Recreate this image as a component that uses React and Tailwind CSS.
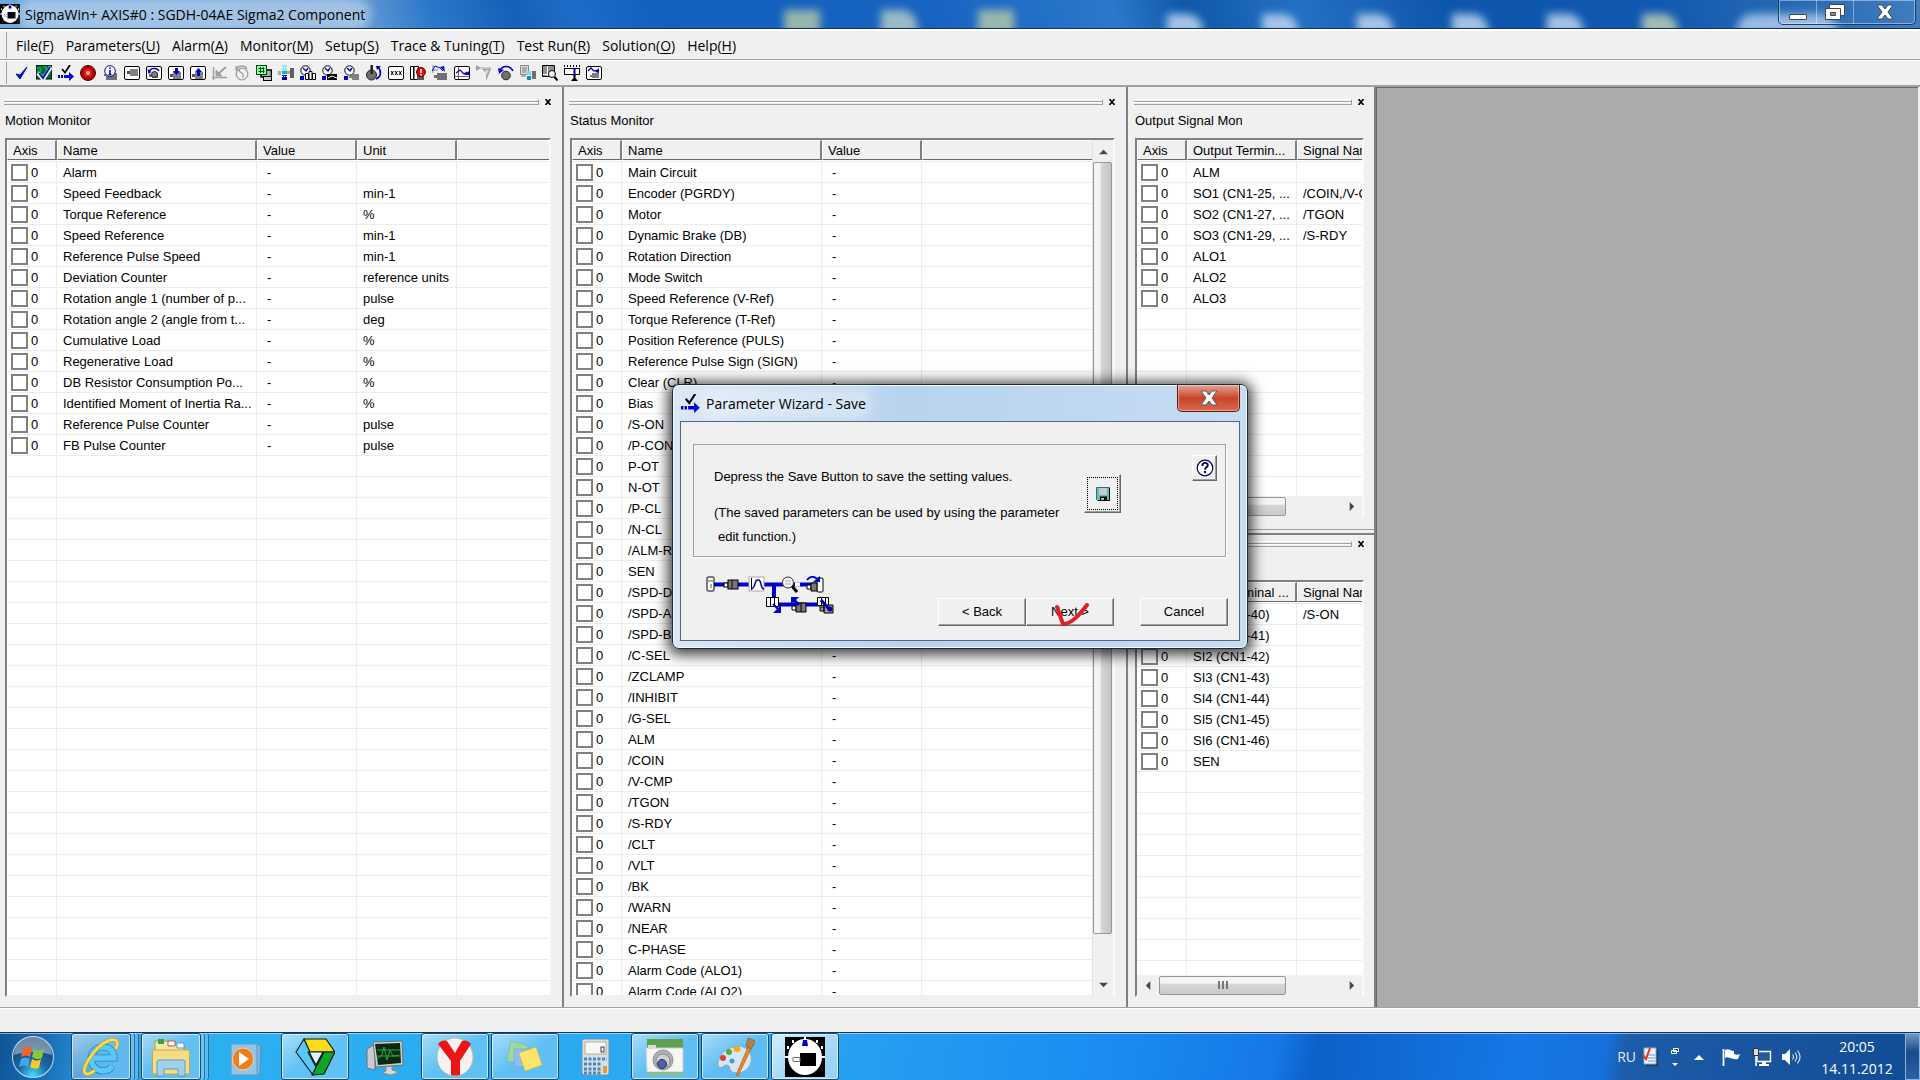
import clsx from "clsx";

const menus = [
  ["File", "F"],
  ["Parameters", "U"],
  ["Alarm", "A"],
  ["Monitor", "M"],
  ["Setup", "S"],
  ["Trace & Tuning", "T"],
  ["Test Run", "R"],
  ["Solution", "O"],
  ["Help", "H"],
];

const motionRows = [
  ["Alarm", "-", ""],
  ["Speed Feedback", "-", "min-1"],
  ["Torque Reference", "-", "%"],
  ["Speed Reference", "-", "min-1"],
  ["Reference Pulse Speed", "-", "min-1"],
  ["Deviation Counter", "-", "reference units"],
  ["Rotation angle 1 (number of p...", "-", "pulse"],
  ["Rotation angle 2 (angle from t...", "-", "deg"],
  ["Cumulative Load", "-", "%"],
  ["Regenerative Load", "-", "%"],
  ["DB Resistor Consumption Po...", "-", "%"],
  ["Identified Moment of Inertia Ra...", "-", "%"],
  ["Reference Pulse Counter", "-", "pulse"],
  ["FB Pulse Counter", "-", "pulse"],
];

const statusRows = [
  "Main Circuit", "Encoder (PGRDY)", "Motor", "Dynamic Brake (DB)", "Rotation Direction",
  "Mode Switch", "Speed Reference (V-Ref)", "Torque Reference (T-Ref)", "Position Reference (PULS)",
  "Reference Pulse Sign (SIGN)", "Clear (CLR)", "Bias", "/S-ON", "/P-CON", "P-OT", "N-OT", "/P-CL",
  "/N-CL", "/ALM-RST", "SEN", "/SPD-D", "/SPD-A", "/SPD-B", "/C-SEL", "/ZCLAMP", "/INHIBIT",
  "/G-SEL", "ALM", "/COIN", "/V-CMP", "/TGON", "/S-RDY", "/CLT", "/VLT", "/BK", "/WARN", "/NEAR",
  "C-PHASE", "Alarm Code (ALO1)", "Alarm Code (ALO2)",
].map((name) => [name, "-"]);

const outputRows = [
  ["ALM", ""],
  ["SO1 (CN1-25, ...", "/COIN,/V-CMP"],
  ["SO2 (CN1-27, ...", "/TGON"],
  ["SO3 (CN1-29, ...", "/S-RDY"],
  ["ALO1", ""],
  ["ALO2", ""],
  ["ALO3", ""],
];

const inputRows = [
  ["SI0 (CN1-40)", "/S-ON"],
  ["SI1 (CN1-41)", ""],
  ["SI2 (CN1-42)", ""],
  ["SI3 (CN1-43)", ""],
  ["SI4 (CN1-44)", ""],
  ["SI5 (CN1-45)", ""],
  ["SI6 (CN1-46)", ""],
  ["SEN", ""],
];

/* ---------- toolbar icons, 16x16 pixel style ---------- */

const Box = () => <rect x=".5" y="1.5" width="15" height="13" rx="1.5" fill="#fff" stroke="#000" />;
const Motor = ({ x = 3, y = 5 }) => (
  <g>
    <rect x={x} y={y + 1} width="3" height="3" fill="#555" />
    <rect x={x + 3} y={y - 1} width="8" height="7" fill="#808080" />
  </g>
);
const Gauge = () => (
  <g>
    <rect x="0" y="11" width="4" height="4" fill="#0000c8" />
    <circle cx="5.5" cy="5.5" r="4.7" fill="#fff" stroke="#000" />
    <path d="M3 3l3 3 2-3" fill="none" stroke="#0000c8" strokeWidth="1.4" />
  </g>
);

const toolIcons = {
  "Check": <path d="M2 9l4 5 7-12-7 8z" fill="#0010c0" stroke="#0010c0" />,
  "Edit parameters": (
    <g>
      <rect width="16" height="14" fill="#063" stroke="#000" />
      <path d="M1 3h4v3H2v4h3M7 2h3v3h3V1" fill="none" stroke="#2c4" />
      <path d="M2 8l5 6 8-12" fill="none" stroke="#fff" strokeWidth="4" />
      <path d="M3 8l4 5 7-11" fill="none" stroke="#0010c0" strokeWidth="2" />
    </g>
  ),
  "Parameter wizard": <WizardMark />,
  "Alarm": (
    <g>
      <circle cx="8" cy="8" r="7.5" fill="#b00000" stroke="#500" />
      <circle cx="8" cy="8" r="4" fill="#e02020" />
      <circle cx="8" cy="8" r="2" fill="#ff9a8a" />
    </g>
  ),
  "Product information": (
    <g>
      <path d="M2 9h2v2H2zM4 8h11v7H4z" fill="#707070" />
      <circle cx="8" cy="6" r="5.3" fill="#fff" stroke="#0010a0" />
      <path d="M8 2.5v1.6M8 5v4.6M6.5 9.5h3" stroke="#0010c0" strokeWidth="1.6" />
    </g>
  ),
  "Motor": <g><Box /><Motor /></g>,
  "Jog": (
    <g>
      <Box />
      <path d="M3 9h3v3H3zM6 8h6v5H6z" fill="#707070" />
      <circle cx="8.5" cy="9.5" r="3" fill="#808080" stroke="#222" />
      <path d="M3 7c1-4 8-5 10-1" fill="none" stroke="#0000c8" strokeWidth="1.5" />
      <path d="M1.500 4l1 5 3-2z" fill="#0000c8" />
    </g>
  ),
  "Write": <g><Box /><Motor y={8} x={2} /><path d="M7 3h3v3h2l-3.500 4L5 6h2z" fill="#0000c8" /></g>,
  "Read": <g><Box /><Motor y={8} x={2} /><path d="M7 11h3V7h2L8.500 3 5 7h2z" fill="#0000c8" /></g>,
  "Origin": (
    <g fill="none" stroke="#a0a0a0">
      <path d="M1.500 2v13M0 12.500h15" strokeWidth="1.5" />
      <path d="M14 2L6 9" strokeWidth="2" />
      <path d="M4 5v6h6z" fill="#a0a0a0" />
    </g>
  ),
  "Rotation": (
    <g fill="none" stroke="#a0a0a0" strokeWidth="1.300">
      <circle cx="8" cy="9" r="5.800" />
      <path d="M2 4c3-4 9-4 11 0M5 6l4 3v4M2 1v4h4" />
    </g>
  ),
  "System monitor": (
    <g>
      <path d="M10 5h5.500v7H5V9.500" fill="#aaa" stroke="#000" strokeWidth="1.400" />
      <rect x="7.500" y="11.500" width="8" height="4" fill="#ccc" stroke="#000" />
      <rect x=".5" y=".5" width="10" height="9" fill="#9f9" stroke="#042" />
      <path d="M2.500 3.500h6M2.500 6.500h6M4.500 2v6M7.500 2v6" stroke="#052" />
    </g>
  ),
  "Encoder": (
    <g>
      <path d="M0 6h3v4H0zM9 6h3v3H9z" fill="#aaa" />
      <path d="M12 3h4v10h-4z" fill="#606060" />
      <path d="M4 0h5v6H4z" fill="#8fe8f0" />
      <path d="M4 6h5v3H4z" fill="#18b0b8" />
      <path d="M4 10h5v5H4z" fill="#0000a0" />
      <path d="M4 2.500h5M4 11.500h5" stroke="#fff" strokeDasharray="1 1" />
    </g>
  ),
  "Trace bars": (
    <g>
      <Gauge />
      <path d="M5.500 8.500h3v6h-3zM9 6.500h3v8H9zM12.500 8.500h3v6h-3z" fill="#fff" stroke="#000" />
    </g>
  ),
  "Trace wave": <g><Gauge /><path d="M5 9h10v6H5z" /><path d="M6 13l4-2 5 2" fill="none" stroke="#fff" /></g>,
  "Trace motor": <g><Gauge /><path d="M5 10h3v3H5zM8 9h7v6H8z" fill="#808080" /></g>,
  "Rotate motor": (
    <g>
      <circle cx="5.500" cy="10" r="5" fill="#707070" stroke="#222" />
      <path d="M4.500 0h2.500v9H4.500z" fill="#222" />
      <path d="M10 14c5-2 6-8 2-12" fill="none" stroke="#0000c8" strokeWidth="1.600" />
      <path d="M10 1h5l-4 4z" fill="#0000c8" />
    </g>
  ),
  "Multi-turn": <g><Box /><path d="M3 6l2.500 4M5.500 6L3 10M7 6l2.500 4M9.500 6L7 10M11 6l2.500 4M13.500 6L11 10" stroke="#000" /></g>,
  "Alarm trace": (
    <g>
      <path d="M.5 1.500h3v13h-3zM4 1.500h4.500v13H4z" fill="#fff" stroke="#000" />
      <path d="M7 3h7v12H7z" fill="#555" />
      <circle cx="11" cy="7" r="4.500" fill="#d81010" stroke="#700" />
      <path d="M11 4v4M11 9v1.500" stroke="#fff" strokeWidth="1.500" />
    </g>
  ),
  "Program jog": (
    <g>
      <path d="M1 0v8M0 5h6" stroke="#888" />
      <path d="M0 6l3-5 5 2 3 3" fill="none" stroke="#0000c8" />
      <path d="M8 2l5 5-1-6z" fill="#0000c8" />
      <path d="M2 10h3v3H2zM5 8h10v7H5z" fill="#707070" />
    </g>
  ),
  "Trace": (
    <g>
      <Box />
      <path d="M4.500 2v12M1 11.500h14" stroke="#666" />
      <path d="M2 8l4-3 4 4 3-2" fill="none" stroke="#0000c8" strokeWidth="1.300" />
      <path d="M10 10h5V6z" fill="#0000c8" />
    </g>
  ),
  "Filter": (
    <g fill="#a0a0a0">
      <path d="M0 0l5 3-5 3zM0 2.500h15v1H0z" />
      <path d="M6 4h9l-5 12V8z" />
      <path d="M9 5h4L10 11z" fill="#d8d8d8" />
    </g>
  ),
  "Oscillation": (
    <g>
      <circle cx="8" cy="10.500" r="4.300" fill="#707070" stroke="#222" />
      <path d="M2 6c2-6 10-6 13 0" fill="none" stroke="#0000c8" strokeWidth="1.600" />
      <path d="M0 3l1 6 5-4z" fill="#0000c8" />
    </g>
  ),
  "Report": (
    <g>
      <path d="M.5.5h8v9h-8z" fill="#ddd" stroke="#888" />
      <path d="M2 3h5M2 5h5M2 7h4M1 11h5" stroke="#777" />
      <path d="M7 6h4v4H7z" fill="#6fe0e8" />
      <path d="M7 11h4v4H7z" fill="#1090a8" />
      <path d="M12 6h4v8h-4z" fill="#707070" />
    </g>
  ),
  "Search": (
    <g>
      <path d="M.5.500h12v11H.5z" fill="#909090" stroke="#000" />
      <path d="M5.500 1v10M1 9.500h11" stroke="#fff" />
      <circle cx="10" cy="9" r="3.500" fill="#fff" stroke="#000" />
      <path d="M12.500 12l3 3.500" stroke="#000" strokeWidth="2" />
    </g>
  ),
  "Machine": (
    <g>
      <path d="M0 1h16" stroke="#000" strokeWidth="2" strokeDasharray="1 2" />
      <path d="M.5 3.500h15v6H.5z" fill="#fff" stroke="#000" />
      <path d="M10.500 3v8" stroke="#0000a0" strokeWidth="2" />
      <path d="M9.500 10h2v3l2.500 3H7l2.500-3z" />
    </g>
  ),
  "Mechanical analysis": (
    <g>
      <Box />
      <path d="M2 6l3-3 3 3 3-1" fill="none" stroke="#0000c8" strokeWidth="1.300" />
      <path d="M9 7l4-4v5z" fill="#0000c8" />
      <path d="M4 10h2v2H4zM6 8h7v5H6z" fill="#808080" />
    </g>
  ),
};

function WizardMark() {
  return (
    <g>
      <path d="M4 4l3 3.500L12 0" fill="none" stroke="#000" strokeWidth="1.800" />
      <path d="M0 10h2v3H0zM3 10h2v3H3zM6 10h5V7l5 4.500-5 4.500v-3H6z" fill="#0000d8" />
    </g>
  );
}

function SigmaLogo({ className }) {
  return (
    <svg viewBox="0 0 40 40" className={className} preserveAspectRatio="none" aria-hidden="true">
      <rect width="40" height="40" />
      <ellipse cx="20" cy="20" rx="17" ry="18" fill="#fff" />
      <path d="M0 20h4M36 20h4" stroke="#fff" strokeWidth="2" />
      <path d="M20 0v3M8 3v3M32 3v3M3 9v3M37 9v3" stroke="#fff" strokeWidth="2" />
      <path d="M18 3h4l1 6h-6z" fill="#00c" />
      <rect x="15" y="16" width="16" height="13" />
      <path d="M8 20.500h7v4H8z" fill="#fff" stroke="#777" />
    </svg>
  );
}

/* ---------- docked panels ---------- */

function Gripper({ label }) {
  return (
    <div className="flex h-[7px] items-center gap-1">
      <div className="h-[6px] flex-1 border-y border-r border-t-white border-r-[#a0a0a0] border-b-[#a0a0a0] bg-[#f0f0f0]">
        <div className="mt-px h-px bg-[#a0a0a0]" />
        <div className="h-px bg-white" />
      </div>
      <button aria-label={`Close ${label}`} className="flex w-[8px] justify-end">
        <svg viewBox="0 0 6 6" className="size-[6px]" aria-hidden="true">
          <path d="M.5 0L5.500 6M5.500 0L.5 6" stroke="#000" strokeWidth="1.600" />
        </svg>
      </button>
    </div>
  );
}

function SignalTable({ label, columns, rows }) {
  const filler = Array.from({ length: Math.max(0, 64 - rows.length) });
  return (
    <table aria-label={label} className="w-full table-fixed border-separate border-spacing-0">
      <colgroup>
        {columns.map((c, i) => (
          <col key={i} className={c.width} />
        ))}
      </colgroup>
      <thead>
        <tr>
          {columns.map((c, i) => (
            <th key={i} className="h-[22px] overflow-hidden border-b border-[#ececec] p-0 pb-px text-left font-normal">
              <div
                className={clsx(
                  "h-[20px] overflow-hidden whitespace-nowrap border-b border-t border-l border-b-[#696969] border-t-white border-l-white bg-[#f0f0f0] pl-[5px] leading-[19px]",
                  i < columns.length - 1 && "border-r-2 border-r-[#808080]"
                )}
              >
                {c.title}
              </div>
            </th>
          ))}
        </tr>
      </thead>
      <tbody>
        {rows.map((row, r) => (
          <tr key={r}>
            <td className="h-[21px] border-r border-b border-[#ececec] p-0 pt-px">
              <label className="flex items-center gap-[3px] pl-1 leading-[19px]">
                <input
                  type="checkbox"
                  className="size-[17px] appearance-none border-2 border-[#808080] bg-white"
                />
                0
              </label>
            </td>
            {columns.slice(1).map((c, i) => (
              <td
                key={i}
                className={clsx(
                  "overflow-hidden whitespace-nowrap border-b border-[#ececec] p-0 pt-px leading-[19px]",
                  i < columns.length - 2 && "border-r",
                  c.title === "Value" ? "pl-[10px]" : "pl-[6px]"
                )}
              >
                {row[i]}
              </td>
            ))}
          </tr>
        ))}
        {filler.map((_, r) => (
          <tr key={`f${r}`}>
            {columns.map((c, i) => (
              <td
                key={i}
                className={clsx(
                  "h-[21px] border-b border-[#ececec] p-0",
                  i < columns.length - 1 && "border-r"
                )}
              />
            ))}
          </tr>
        ))}
      </tbody>
    </table>
  );
}

function Arrow({ d }) {
  return (
    <svg viewBox="0 0 10 10" className="size-[9px]" aria-hidden="true">
      <path d={d} fill="#484848" />
    </svg>
  );
}

function VScroll() {
  return (
    <div className="flex w-[21px] shrink-0 flex-col items-center border-l border-[#e4e4e4] bg-[#f0f0f0]">
      <button aria-label="Scroll up" className="flex h-[22px] items-center"><Arrow d="M0 8l5-5 5 5z" /></button>
      <div className="flex w-full flex-1 flex-col">
        <div className="w-[19px] flex-[773] rounded-[2px] border border-[#979797] bg-linear-to-r from-[#f4f4f4] from-35% via-[#d4d5d8] via-45% to-[#c2c4c9]" />
        <div className="flex-[40]" />
      </div>
      <button aria-label="Scroll down" className="flex h-[21px] items-center"><Arrow d="M0 3l5 5 5-5z" /></button>
    </div>
  );
}

function HScroll() {
  return (
    <div className="flex h-[20px] shrink-0 items-center bg-[#f0f0f0]">
      <button aria-label="Scroll left" className="flex w-[22px] justify-center"><Arrow d="M7 0L2 5l5 5z" /></button>
      <div className="flex h-[19px] w-[127px] items-center justify-center gap-[2px] rounded-[2px] border border-[#979797] bg-linear-to-b from-[#f4f4f4] from-35% via-[#d4d5d8] via-45% to-[#c8cacf]">
        <i className="h-2 w-[2px] bg-[#777]" />
        <i className="h-2 w-[2px] bg-[#777]" />
        <i className="h-2 w-[2px] bg-[#777]" />
      </div>
      <div className="flex-1" />
      <button aria-label="Scroll right" className="flex w-[22px] justify-center"><Arrow d="M3 0l5 5-5 5z" /></button>
    </div>
  );
}

function Panel({ title, clipTitle, columns, rows, vscroll, hscroll, className }) {
  return (
    <section className={clsx("flex min-h-0 flex-col pt-[11px] pl-1 text-[13px]", className)}>
      <Gripper label={title} />
      <h2 className={clsx("h-[33px] overflow-hidden whitespace-nowrap pl-px leading-[31px]", clipTitle && "w-[108px]")}>
        {title}
      </h2>
      <div className="ml-px flex min-h-0 flex-1 border-2 border-t-[#808080] border-r-[#fafafa] border-b-[#f0f0f0] border-l-[#808080] bg-white">
        <div className="flex min-w-0 flex-1 flex-col">
          <div className="min-h-0 flex-1 overflow-hidden">
            <SignalTable label={title} columns={columns} rows={rows} />
          </div>
          {hscroll && <HScroll />}
        </div>
        {vscroll && <VScroll />}
      </div>
    </section>
  );
}

/* ---------- wizard dialog ---------- */

const raised =
  "border border-t-white border-l-white border-r-[#696969] border-b-[#696969] bg-[#f0f0f0] shadow-[inset_-1px_-1px_0_#a0a0a0]";

function FlowDiagram() {
  return (
    <svg viewBox="0 0 128 38" className="h-[38px] w-[128px]" role="img" aria-label="Wizard steps">
      <path d="M8 8.500h104M68 8v20M60 28.500h55" stroke="#0000c8" strokeWidth="4" fill="none" />
      <rect x="1" y="1" width="7" height="14" rx="1" fill="#fff" stroke="#000" />
      <path d="M2 5h5M5 8v4" stroke="#555" />
      <rect x="18" y="7" width="4" height="4" fill="#fff" stroke="#000" />
      <rect x="22" y="4" width="10" height="9" fill="#777" stroke="#000" />
      <path d="M26 4v9" stroke="#000" />
      <rect x="43" y="1" width="15" height="14" fill="#fff" stroke="#aaa" />
      <path d="M45.500 2v12" stroke="#000" />
      <path d="M45 13c5 0 3-9 6.500-9h1C56 4 54 13 58 13" stroke="#0000a0" strokeWidth="1.500" fill="none" />
      <path d="M86 10l5 6" stroke="#000" strokeWidth="3" />
      <circle cx="82" cy="6.500" r="5.500" fill="#f4f4f4" stroke="#333" />
      <path d="M79 5h6M79 8h6" stroke="#aaa" />
      <path d="M89 8.500h5" stroke="#fff" strokeWidth="4" />
      <rect x="111" y="2" width="6" height="14" rx="1" fill="#fff" stroke="#000" />
      <path d="M101 9h4v4h-4z" fill="#fff" stroke="#000" />
      <path d="M105 7h6v8h-6z" fill="#777" stroke="#000" />
      <path d="M101 4c3-4 7-4 10-1" stroke="#0000c8" strokeWidth="2" fill="none" />
      <path d="M107 6h7V0z" fill="#0000c8" />
      <path d="M60.500 21.500h4v9h-4zM64.500 21.500h4v9h-4zM68.500 21.500h4v9h-4z" fill="#fff" stroke="#000" />
      <path d="M67 28l6 6" stroke="#0000c8" strokeWidth="2" />
      <path d="M75 29v8h-8z" fill="#0000c8" />
      <path d="M86 30h4v4h-4z" fill="#fff" stroke="#000" />
      <path d="M90 27h10v9H90z" fill="#777" stroke="#000" />
      <path d="M95 27v9" stroke="#000" />
      <path d="M93 29l-5-5" stroke="#0000c8" strokeWidth="3" />
      <path d="M85 29v-8h8z" fill="#0000c8" />
      <path d="M111.500 21.500h4v8h-4zM115.500 21.500h4v8h-4zM119.500 21.500h3v8h-3z" fill="#fff" stroke="#000" />
      <path d="M114 31h4v4h-4zM118 29h9v8h-9z" fill="#999" stroke="#000" />
      <path d="M115 24l9 10" stroke="#0000a8" strokeWidth="3" />
      <circle cx="124" cy="33" r="2.500" fill="#0000a8" />
    </svg>
  );
}

function WizardDialog() {
  return (
    <div
      role="dialog"
      aria-label="Parameter Wizard - Save"
      className="absolute top-[384px] left-[672px] flex h-[265px] w-[576px] flex-col rounded-[7px] border border-[#1e2a38] bg-linear-to-r from-[#dbe8f5] via-[#b9d3ef] via-40% to-[#c6dcf2] px-[7px] pb-[7px] shadow-[inset_0_0_0_1px_#f2f8ff,0_2px_14px_4px_rgba(0,0,0,0.75)]"
    >
      <div className="flex h-[36px] items-start justify-between">
        <div className="flex items-center gap-[6px] pt-[9px] pl-px">
          <svg viewBox="0 0 16 16" className="size-[19px]" aria-hidden="true"><WizardMark /></svg>
          <span className="rounded bg-white/30 font-['Open_Sans',sans-serif] text-[14px] leading-[19px] text-black shadow-[0_0_10px_6px_rgba(255,255,255,0.3)]">
            Parameter Wizard - Save
          </span>
        </div>
        <button
          aria-label="Close dialog"
          className="flex h-[27px] w-[63px] items-center justify-center rounded-b-[5px] border border-t-0 border-[#5a1a12] bg-linear-to-b from-[#e3a394] via-[#c9432a] via-50% to-[#d8694c] shadow-[inset_0_0_0_1px_rgba(255,255,255,0.4)]"
        >
          <svg viewBox="0 0 18 16" className="h-4 w-[18px]" aria-hidden="true">
            <path d="M1 1h5l3 4 3-4h5l-5 7 5 7h-5l-3-4-3 4H1l5-7z" fill="#fff" stroke="#555a66" />
          </svg>
        </button>
      </div>
      <div className="flex flex-1 flex-col border border-[#56677c] bg-[#f0f0f0] pt-[22px] pr-[13px] pl-[12px] text-[13px]">
        <div className="flex h-[113px] border border-[#a0a0a0] pt-[10px] pr-[8px] pl-[20px] shadow-[1px_1px_0_#fff]">
          <div className="flex-1 pt-[12px]">
            <p className="leading-[20px]">Depress the Save Button to save the setting values.</p>
            <p className="pt-[14px] leading-[24px] whitespace-nowrap">
              (The saved parameters can be used by using the parameter
              <br />
              <span className="pl-1">edit function.)</span>
            </p>
          </div>
          <button aria-label="Save" className={clsx("mt-[19px] mr-[71px] h-[39px] w-[37px] p-[2px]", raised)}>
            <span className="flex size-full items-center justify-center border border-dotted border-black">
              <svg viewBox="0 0 14 14" className="size-[14px]" aria-hidden="true">
                <path d="M.5.500h13v13h-12l-1-1z" fill="#5cc0bc" stroke="#3a6a6a" />
                <path d="M13.500 1v12.500H2" fill="none" stroke="#000" />
                <path d="M3 1h8v7H3z" fill="#c8c8c8" />
                <path d="M4 9.500h7V14H4z" />
                <path d="M5 11h3v2H5z" fill="#bbb" />
              </svg>
            </span>
          </button>
          <button aria-label="Help" className={clsx("flex h-[26px] w-[25px] items-center justify-center", raised)}>
            <svg viewBox="0 0 18 18" className="size-[18px]" aria-hidden="true">
              <circle cx="9" cy="9" r="7.800" fill="#fff" stroke="#000060" strokeWidth="1.200" />
              <path d="M6.300 7c0-4 5.500-4 5.500-.8C11.800 8.500 9 8 9 10.800" fill="none" stroke="#000060" strokeWidth="1.900" />
              <path d="M8 12h2v2H8z" fill="#000060" />
            </svg>
          </button>
        </div>
        <div className="flex pt-[19px]">
          <div className="flex-1 pl-[13px]"><FlowDiagram /></div>
          <div className="mt-[22px] -mr-[2px] flex h-[28px]">
            <button className={clsx("w-[88px]", raised)}>&lt; Back</button>
            <button className={clsx("relative mr-[26px] w-[88px]", raised)}>
              Next &gt;
              <svg viewBox="0 0 34 24" className="absolute top-[4px] left-[28px] h-6 w-[34px]" aria-hidden="true">
                <path d="M2 4c2 5 4 12 6 17 9 0 17-10 24-19" fill="none" stroke="#e0202a" strokeWidth="4" strokeLinecap="round" strokeLinejoin="round" />
              </svg>
            </button>
            <button className={clsx("w-[88px]", raised)}>Cancel</button>
          </div>
        </div>
      </div>
    </div>
  );
}

/* ---------- taskbar ---------- */

function StartOrb() {
  return (
    <svg viewBox="0 0 44 44" className="size-[44px]" aria-hidden="true">
      <defs>
        <radialGradient id="orb" cx=".5" cy=".95" r=".9">
          <stop offset="0" stopColor="#3fe0ff" />
          <stop offset=".4" stopColor="#1a6aa8" />
          <stop offset="1" stopColor="#123a66" />
        </radialGradient>
      </defs>
      <circle cx="22" cy="22" r="20.500" fill="url(#orb)" stroke="#a8cbe6" strokeWidth="1.200" />
      <path d="M3 20a19 19 0 0138 0c-10-4-28-4-38 0z" fill="#fff" opacity=".4" />
      <path d="M12 13c3-2 6-2 9 0l-2 9c-3-2-6-2-9 0z" fill="#f0642a" />
      <path d="M23 14c3 2 6 2 10 0l-2 9c-4 2-7 1-10-1z" fill="#8cc63c" />
      <path d="M10 24c3-2 6-2 9 0l-2 8c-3-2-6-2-9 0z" fill="#4aa4ea" />
      <path d="M21 24c3 2 6 2 9 0l-2 9c-3 1-6 1-9-1z" fill="#fcc828" />
    </svg>
  );
}

const appIcons = {
  "Internet Explorer": (
    <g fill="none" strokeLinecap="round">
      <path d="M11 21h22c0-7-5-11-11-11s-12 5-12 12 6 12 12 12c4 0 7-1 9-5" stroke="#1f86c8" strokeWidth="7" strokeLinecap="butt" />
      <path d="M11 21h22c0-7-5-11-11-11s-12 5-12 12 6 12 12 12c4 0 7-1 9-5" stroke="#5cc8f6" strokeWidth="5.500" strokeLinecap="butt" />
      <path d="M13 34c-4 3-7 4-9 2C-1 31 20 0 34 3c3 1 3 4 1 8" stroke="#c89c10" strokeWidth="3.600" />
      <path d="M13 34c-4 3-7 4-9 2C-1 31 20 0 34 3c3 1 3 4 1 8" stroke="#f8dc4c" strokeWidth="2.600" />
    </g>
  ),
  "Explorer": (
    <g>
      <path d="M4 4h13l2 4h14v6H4z" fill="#f6e7a0" stroke="#b89838" />
      <path d="M7 2h6v5H7z" fill="#3a9a58" />
      <path d="M17 4h7v5h-7z" fill="#fff" stroke="#b55" />
      <path d="M26 6h7v5h-7z" fill="#fff" stroke="#59c" />
      <path d="M1.500 13h37v24h-37z" fill="#f4dc86" stroke="#c9a648" />
      <path d="M6 39V25q0-2 2-2h24q2 0 2 2v14h-7v-7H13v7z" fill="#9fd2ee" stroke="#5a9cc8" />
    </g>
  ),
  "Media Player": (
    <g>
      <path d="M14 8h22l-1 30H14z" fill="#7ab8de" stroke="#4f90bc" />
      <path d="M6 7h26v31H6z" fill="#8ec6e8" stroke="#5c9cc6" />
      <ellipse cx="18" cy="22" rx="10.500" ry="11" fill="#f07c1e" stroke="#fbd0a0" />
      <path d="M14 15l10 7-10 7z" fill="#fff" />
    </g>
  ),
  "Punto": (
    <g stroke="#0a1a10" strokeWidth="1.200" strokeLinejoin="round">
      <path d="M9 2h22l9 13H15l-6-9z" fill="#ffd91c" />
      <path d="M9 2l6 13h-2l9 17-4 6L1 15z" fill="#59c8f6" />
      <path d="M40 15L29 37l-12 1 12-23z" fill="#0fa52a" />
      <path d="M14 15h14l-7 13z" fill="#dff3fb" />
    </g>
  ),
  "System Monitor": (
    <g>
      <path d="M2 12l8-5v26l-8-2z" fill="#c8ccd0" stroke="#6d7378" />
      <path d="M8 5l29-1 1 24-27 2z" fill="#d0d0cc" stroke="#70746f" />
      <path d="M10 7l25-1 1 20-23 2z" fill="#0a2a14" />
      <path d="M12 22l5-4 2-8 3 13 3-10 3 6 6-1M12 13h23M12 19h23" fill="none" stroke="#28a848" />
      <path d="M21 30l6-1v4l7 2-8 3-9-2 4-2z" fill="#d8d8d8" stroke="#888" />
    </g>
  ),
  "Yandex": (
    <g>
      <ellipse cx="20" cy="20" rx="18" ry="19" fill="#f4f2f0" stroke="#bbb" />
      <path d="M3 7q4-5 9-3l8 12 7-12q5-2 9 3L25 24v14q-5 1-9 0V24z" fill="#ee1414" />
    </g>
  ),
  "Sticky Notes": (
    <g>
      <path d="M6 4l17 5-5 18L2 24z" fill="#9fd99c" stroke="#7cbb7c" strokeWidth=".6" />
      <path d="M9 12h18v18H9z" fill="#8cbff0" stroke="#6ea2d4" strokeWidth=".6" />
      <path d="M14 16l17-6 6 18-17 6z" fill="#fde56c" stroke="#d2b640" strokeWidth=".6" />
    </g>
  ),
  "Calculator": (
    <g>
      <rect x="7" y="2" width="27" height="36" rx="2" fill="#cfe0ee" stroke="#6d93b4" />
      <rect x="10" y="5" width="21" height="12" fill="#f4f8fb" stroke="#d9a85c" />
      <rect x="26" y="10" width="3" height="5" fill="none" stroke="#345" />
      <path d="M9 22h23M9 27h17M9 32h17M9 36h17" stroke="#5583ac" strokeWidth="3" strokeDasharray="3 1.500" />
      <path d="M28 29h4v7h-4z" fill="#f09a2a" />
    </g>
  ),
  "Camera": (
    <g>
      <path d="M2 2h36v9H2z" fill="#5fa050" />
      <path d="M1 11h37v24H2z" fill="#f6f6f4" stroke="#c8ccc8" />
      <path d="M2 35h36v3H2z" fill="#8cc080" />
      <path d="M3 8h8v4H3z" fill="#ddd" />
      <circle cx="18" cy="23" r="10" fill="#aeb0b4" stroke="#909498" />
      <circle cx="18" cy="24" r="7" fill="#d0d0d4" stroke="#888" />
      <circle cx="17" cy="27" r="4.500" fill="#4c60b0" stroke="#334" />
    </g>
  ),
  "Paint": (
    <g>
      <path d="M3 29C2 16 16 7 28 10c9 3 11 14 5 21-5 6-14 6-17 3-2-4-1-6-5-6-3 0-4 5-8 1z" fill="#d8e6f2" stroke="#8fa8be" />
      <ellipse cx="8" cy="21" rx="3" ry="3" fill="#d84038" />
      <ellipse cx="14" cy="15" rx="3" ry="3" fill="#58a83c" />
      <ellipse cx="22" cy="12" rx="3.500" ry="3" fill="#f0b020" />
      <circle cx="17" cy="24" r="2.500" fill="#3c9ce0" />
      <path d="M33 10l3 2-13 27-2-1z" fill="#e88a28" stroke="#a05a10" strokeWidth=".6" />
      <path d="M31 9l2-8 8 3-5 8z" fill="#b88048" stroke="#80542a" strokeWidth=".6" />
    </g>
  ),
};

const tasks = [
  { name: "Internet Explorer", open: true, stacked: true },
  { name: "Explorer", open: true, stacked: true },
  { name: "Media Player" },
  { name: "Punto", open: true },
  { name: "System Monitor" },
  { name: "Yandex", open: true },
  { name: "Sticky Notes", open: true },
  { name: "Calculator" },
  { name: "Camera", open: true },
  { name: "Paint", open: true },
  { name: "SigmaWin+", open: true, active: true },
];

function Taskbar() {
  return (
    <footer className="flex h-[48px] shrink-0 border-t border-[#12365e] bg-[linear-gradient(100deg,#0f5496_0,#1a6fb8_50px,#2f9fe6_110px,#2bb0f2_220px,#2aa6f0_760px,#1b8bf2_1100px,#1478e6_1260px,#0d60c8_1300px,#1478e6_1500px,#1670dc_1585px,#1c5ca8_1605px,#17529c_1780px,#0f4a94_1920px)] font-['Open_Sans',sans-serif] text-white shadow-[inset_0_1px_0_rgba(255,255,255,0.5)]">
      <button aria-label="Start" className="flex w-[71px] items-center pl-[11px]"><StartOrb /></button>
      <div className="flex flex-1 gap-[2px]">
        {tasks.map((t) => (
          <button key={t.name} aria-label={t.name} className="flex w-[68px]">
            <span
              className={clsx(
                "flex h-full flex-1 items-center justify-center",
                t.open && "rounded-[3px] border border-[#1a4a70] bg-linear-to-br shadow-[inset_0_0_0_1px_rgba(255,255,255,0.6)]",
                t.open && (t.active ? "from-white/80 via-white/60 to-white/50" : "from-white/60 via-white/25 to-white/25")
              )}
            >
              {t.name === "SigmaWin+" ? (
                <SigmaLogo className="size-10" />
              ) : (
                <svg viewBox="0 0 40 40" className="size-10" aria-hidden="true">{appIcons[t.name]}</svg>
              )}
            </span>
            {t.stacked && (
              <>
                <i className="h-full w-1 rounded-r-[3px] border-r border-[#1a4a70]/70 bg-white/30" />
                <i className="h-full w-1 rounded-r-[3px] border-r border-[#1a4a70]/70 bg-white/20" />
              </>
            )}
          </button>
        ))}
      </div>
      <div className="flex items-center">
        <span className="text-[14px] text-[#e4eefa]">RU</span>
        <svg viewBox="0 0 18 20" className="ml-[6px] h-5 w-[18px]" aria-hidden="true">
          <path d="M4 2h12v17H4z" fill="#1a3a66" />
          <path d="M2 1h12v16H2z" fill="#eef4fb" stroke="#8aa8cc" />
          <path d="M6 8h7M6 11h7M6 14h7" stroke="#6c96cc" />
          <path d="M1 8l3 4 4-11" fill="none" stroke="#e03020" strokeWidth="2" />
        </svg>
        <svg viewBox="0 0 10 20" className="ml-[10px] h-5 w-[10px]" aria-hidden="true">
          <path d="M3.500 1.500h5v3h-5zM1.500 3.500h5v3h-5z" fill="#1b56a0" stroke="#fff" />
          <path d="M2 16h6l-3 3z" fill="#fff" />
        </svg>
        <svg viewBox="0 0 10 6" className="ml-[14px] h-[6px] w-[10px]" aria-hidden="true">
          <path d="M0 6l5-5 5 5z" fill="#fff" />
        </svg>
        <svg viewBox="0 0 20 20" className="ml-[18px] size-5" aria-hidden="true">
          <path d="M1.500 2v17" stroke="#fff" strokeWidth="1.800" />
          <path d="M3 3c4-2 5 1 9 1v3c3 1 4 1 6 0l-2 5c-4 1-6-1-8-1-2-1-3-1-5 0z" fill="#fff" />
        </svg>
        <svg viewBox="0 0 20 20" className="ml-[10px] size-5" aria-hidden="true">
          <path d="M5 4.500h13.500v10H5z" fill="#245c9c" stroke="#fff" strokeWidth="1.400" />
          <path d="M10 15h4v2h3v2H7v-2h3z" fill="#fff" />
          <path d="M1.500 1.500h5v7h-5z" fill="#ddd" stroke="#333" />
          <path d="M4 9v10" stroke="#fff" strokeWidth="1.600" />
        </svg>
        <svg viewBox="0 0 20 20" className="ml-[9px] size-5" aria-hidden="true">
          <path d="M1 7h3l5-5v16l-5-5H1z" fill="#fff" />
          <path d="M11.500 7.500q2 2.500 0 5M14 5.500q3.500 4.500 0 9M16.500 3.500q5 6.500 0 13" fill="none" stroke="#cfe2f8" strokeWidth="1.200" />
        </svg>
        <div className="w-[104px] pt-[2px] pl-2 text-center text-[14px] leading-[22px]">
          <div>20:05</div>
          <div>14.11.2012</div>
        </div>
        <button aria-label="Show desktop" className="h-full w-[15px] border border-[#8fb2dc] bg-linear-to-b from-[#6f95c4] via-[#1a4a88] via-40% to-[#2a62a8]" />
      </div>
    </footer>
  );
}

const axisCol = { title: "Axis", width: "w-[50px]" };

export default function App() {
  return (
    <div className="relative flex h-screen flex-col overflow-hidden bg-[#f0f0f0] font-['Liberation_Sans',Arial,sans-serif] text-black">
      <header className="relative flex h-[29px] shrink-0 items-center overflow-hidden border-b border-[#16305c] bg-[linear-gradient(75deg,#6fa8dc_0,#6fa0d4_340px,#2a78cc_420px,#1560b8_500px,#1f6cc8_560px,#125fbc_640px,#1763c0_900px,#2b78cc_1080px,#0f58a8_1150px,#2470c4_1260px,#0e56ac_1400px,#1058b0_1600px,#2a6cb4_1760px,#4f88c8_1920px)]">
        <div aria-hidden="true" className="absolute top-[10px] left-[784px] flex gap-[61px] opacity-80 blur-[4px]">
          <i className="h-6 w-9 bg-[#b8cca8]" />
          <i className="h-6 w-9 rounded-tr-2xl bg-[#bcd2c8]" />
          <i className="h-6 w-9 bg-[#b8cca8]" />
        </div>
        <div aria-hidden="true" className="absolute top-[14px] left-[1167px] flex gap-[59px] opacity-90 blur-[4px]">
          {[0, 1, 2, 3, 4].map((i) => (
            <i key={i} className="h-5 w-9 rounded-tr-2xl bg-[#b4cfee]" />
          ))}
          <i className="h-5 w-9 rounded-tr-2xl bg-[#b4c8b4]" />
          <i className="h-5 w-[100px] rounded-t-2xl bg-[#a8c6ec]" />
        </div>
        <SigmaLogo className="relative h-5 w-5" />
        <h1 className="relative ml-[5px] rounded-lg bg-white/35 pt-px font-['Open_Sans',sans-serif] text-[14px] leading-[20px] shadow-[0_0_8px_6px_rgba(255,255,255,0.35)]">
          SigmaWin+ AXIS#0 : SGDH-04AE Sigma2 Component
        </h1>
        <div className="absolute top-0 right-1 flex h-[25px] w-[138px] divide-x divide-white/40 rounded-b-[5px] border border-t-0 border-[#1c3c68] shadow-[inset_0_0_0_1px_rgba(255,255,255,0.4)]">
          <button aria-label="Minimize" className="flex w-[38px] items-end justify-center pb-[4px]">
            <i className="h-[6px] w-[18px] rounded-[1px] border border-[#445] bg-white" />
          </button>
          <button aria-label="Restore" className="flex w-[37px] items-center justify-center">
            <svg viewBox="0 0 20 18" className="h-[18px] w-5" aria-hidden="true">
              <path d="M4.500 1.500h15v11h-15z" fill="#fff" stroke="#445" />
              <path d="M.500 5.500h15v11H.500z" fill="#fff" stroke="#445" />
              <path d="M5.500 9.500h5v3h-5z" fill="#79a" stroke="#445" />
            </svg>
          </button>
          <button aria-label="Close" className="flex flex-1 items-center justify-center">
            <svg viewBox="0 0 18 16" className="h-4 w-[18px]" aria-hidden="true">
              <path d="M1 1h5l3 4 3-4h5l-5 7 5 7h-5l-3-4-3 4H1l5-7z" fill="#fff" stroke="#445" />
            </svg>
          </button>
        </div>
      </header>

      <nav className="flex h-[31px] shrink-0 items-center border-t-2 border-b border-t-white border-b-[#a0a0a0] pl-[6px]">
        <i className="mr-[7px] h-[26px] w-px bg-[#a0a0a0]" />
        <div className="flex gap-2 pt-[2px] font-['Open_Sans',sans-serif] text-[14px] leading-[20px]">
          {menus.map(([name, key]) => (
            <button key={name} className="px-[2px] whitespace-nowrap">
              {name}(<u className="underline-offset-2">{key}</u>)
            </button>
          ))}
        </div>
      </nav>

      <div className="flex h-[27px] shrink-0 items-center border-t border-b-2 border-t-white border-b-[#a0a0a0] pl-[6px]">
        <i className="mr-1 h-[22px] w-px bg-[#a0a0a0]" />
        {Object.entries(toolIcons).map(([name, icon]) => (
          <button key={name} aria-label={name} className="flex w-[22px] justify-center">
            <svg viewBox="0 0 16 16" className="size-4" aria-hidden="true">{icon}</svg>
          </button>
        ))}
      </div>

      <main className="flex min-h-0 flex-1 border-b border-[#a0a0a0]">
        <Panel
          title="Motion Monitor"
          className="w-[564px] shrink-0 border-r-2 border-[#808080] pr-[11px] pb-[10px]"
          columns={[
            axisCol,
            { title: "Name", width: "w-[200px]" },
            { title: "Value", width: "w-[100px]" },
            { title: "Unit", width: "w-[100px]" },
            { title: "", width: "w-auto" },
          ]}
          rows={motionRows}
        />
        <Panel
          title="Status Monitor"
          vscroll
          className="ml-px w-[563px] shrink-0 border-r-2 border-[#808080] pr-[11px] pb-[10px]"
          columns={[
            axisCol,
            { title: "Name", width: "w-[200px]" },
            { title: "Value", width: "w-[100px]" },
            { title: "", width: "w-auto" },
          ]}
          rows={statusRows}
        />
        <div className="ml-[2px] flex w-[246px] shrink-0 flex-col border-r-2 border-[#808080]">
          <Panel
            title="Output Signal Monitor"
            clipTitle
            hscroll
            className="flex-[441] basis-0 pr-[10px] pb-[11px]"
            columns={[
              axisCol,
              { title: "Output Termin...", width: "w-[110px]" },
              { title: "Signal Name", width: "w-auto" },
            ]}
            rows={outputRows}
          />
          <div className="-mb-[6px] h-[6px] border-t border-b-2 border-t-[#a0a0a0] border-b-[#808080]" />
          <Panel
            title="Input Signal Monitor"
            clipTitle
            hscroll
            className="flex-[479] basis-0 pr-[10px] pb-[10px]"
            columns={[
              axisCol,
              { title: "Input Terminal ...", width: "w-[110px]" },
              { title: "Signal Name", width: "w-auto" },
            ]}
            rows={inputRows}
          />
        </div>
        <div className="mr-[2px] flex-1 border-t border-l border-[#696969] bg-[#ababab]" />
      </main>

      <div className="h-[24px] shrink-0 border-t border-white" />
      <Taskbar />
      <WizardDialog />
    </div>
  );
}
